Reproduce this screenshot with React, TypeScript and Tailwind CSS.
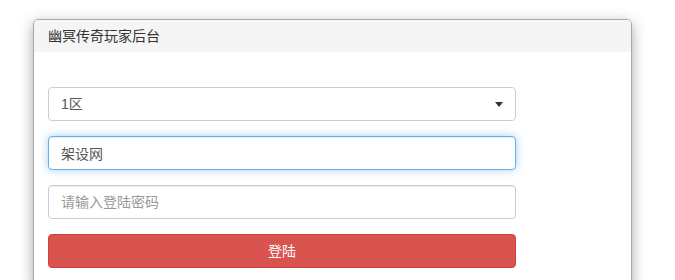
import React, { useState } from 'react';

const App: React.FC = () => {
  const [zone, setZone] = useState('1');
  const [account, setAccount] = useState('架设网');
  const [password, setPassword] = useState('');

  return (
    <div
      className="min-h-[280px] bg-white pt-[19px] pl-[33px]"
      style={{ fontFamily: '"Liberation Sans", "Noto Sans CJK SC", sans-serif' }}
    >
      <div className="w-[599px] rounded-[5px] border border-[#a9a9a9] bg-white shadow-[0_4px_14px_rgba(0,0,0,0.35)] overflow-hidden">
        <div className="h-[32px] bg-[#f5f5f5] px-[14px] flex items-center text-[14px] text-[#333]">
          幽冥传奇玩家后台
        </div>
        <div className="px-[14px] pt-[35px] pb-[20px] flex flex-col gap-[15px]">
          <div className="relative w-[468px]">
            <select
              value={zone}
              onChange={(e) => setZone(e.target.value)}
              className="w-full h-[34px] appearance-none rounded-[4px] border border-[#ccc] bg-white px-[12px] text-[14px] text-[#555] outline-none"
            >
              <option value="1">1区</option>
              <option value="2">2区</option>
            </select>
            <span className="pointer-events-none absolute right-[13px] top-[15px] w-0 h-0 border-l-[4px] border-r-[4px] border-t-[5px] border-l-transparent border-r-transparent border-t-[#333]" />
          </div>
          <input
            value={account}
            onChange={(e) => setAccount(e.target.value)}
            className="w-[468px] h-[34px] rounded-[4px] border border-[#66afe9] bg-white px-[12px] text-[14px] text-[#555] outline-none shadow-[inset_0_1px_1px_rgba(0,0,0,0.075),0_0_8px_rgba(102,175,233,0.6)]"
          />
          <input
            type="password"
            value={password}
            onChange={(e) => setPassword(e.target.value)}
            placeholder="请输入登陆密码"
            className="w-[468px] h-[34px] rounded-[4px] border border-[#ccc] bg-white px-[12px] text-[14px] text-[#555] placeholder:text-[#999] outline-none shadow-[inset_0_1px_1px_rgba(0,0,0,0.075)]"
          />
          <button className="w-[468px] h-[34px] rounded-[4px] border border-[#d43f3a] bg-[#d9534f] text-[14px] text-white">
            登陆
          </button>
        </div>
      </div>
    </div>
  );
};

export default App;
